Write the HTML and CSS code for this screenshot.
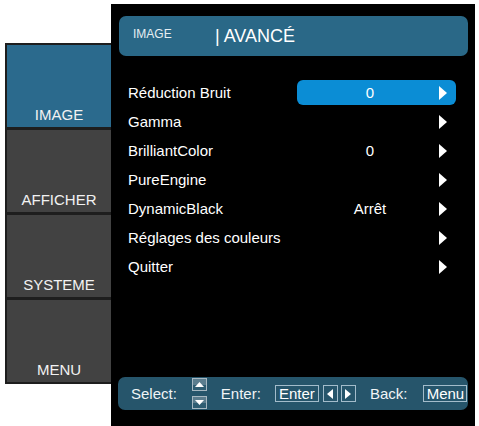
FILE: index.html
```html
<!DOCTYPE html>
<html lang="fr">
<head>
<meta charset="utf-8">
<title>Image | Avancé</title>
<link rel="stylesheet" href="styles.css">
</head>
<body>
<div class="screen">
  <nav class="sidebar">
    <div class="tab active"><span>IMAGE</span></div>
    <div class="tab"><span>AFFICHER</span></div>
    <div class="tab"><span>SYSTEME</span></div>
    <div class="tab"><span>MENU</span></div>
  </nav>
  <main class="panel">
    <header class="title">
      <span class="crumb">IMAGE</span>
      <span class="heading">| AVANCÉ</span>
    </header>
    <ul class="list">
      <li class="row selected"><span class="label">Réduction Bruit</span><span class="ctrl"><span class="value">0</span><span class="arrow"></span></span></li>
      <li class="row"><span class="label">Gamma</span><span class="ctrl"><span class="value"></span><span class="arrow"></span></span></li>
      <li class="row"><span class="label">BrilliantColor</span><span class="ctrl"><span class="value">0</span><span class="arrow"></span></span></li>
      <li class="row"><span class="label">PureEngine</span><span class="ctrl"><span class="value"></span><span class="arrow"></span></span></li>
      <li class="row"><span class="label">DynamicBlack</span><span class="ctrl"><span class="value">Arrêt</span><span class="arrow"></span></span></li>
      <li class="row"><span class="label">Réglages des couleurs</span><span class="ctrl"><span class="value"></span><span class="arrow"></span></span></li>
      <li class="row"><span class="label">Quitter</span><span class="ctrl"><span class="value"></span><span class="arrow"></span></span></li>
    </ul>
    <footer class="help">
      <span class="hint hint-select">Select:</span>
      <span class="updown">
        <span class="ikey"><svg width="13" height="11" viewBox="0 0 13 11"><polygon points="2,8 11,8 6.5,3" fill="#fff"/></svg></span>
        <span class="ikey"><svg width="13" height="11" viewBox="0 0 13 11"><polygon points="2,3 11,3 6.5,8" fill="#fff"/></svg></span>
      </span>
      <span class="hint hint-enter">Enter:</span>
      <span class="key key-word">Enter</span>
      <span class="key key-arrow"><svg width="12" height="14" viewBox="0 0 12 14"><polygon points="9,2 9,12 3,7" fill="#fff"/></svg></span>
      <span class="key key-arrow"><svg width="12" height="14" viewBox="0 0 12 14"><polygon points="3,2 3,12 9,7" fill="#fff"/></svg></span>
      <span class="hint hint-back">Back:</span>
      <span class="key key-word">Menu</span>
    </footer>
  </main>
</div>
</body>
</html>
```
FILE: styles.css
```css
* { box-sizing: border-box; }

html, body {
  margin: 0;
  padding: 0;
  background: #ffffff;
  font-family: "Liberation Sans", Arial, sans-serif;
  color: #ffffff;
}

.screen {
  display: flex;
  align-items: flex-start;
  padding-left: 5px;
  height: 426px;
  overflow: hidden;
}

/* Left sidebar */
.sidebar {
  margin-top: 43px;
  width: 106px;
  background: #1e1e1e;
  border: 2px solid #1e1e1e;
  border-right: 0;
  display: flex;
  flex-direction: column;
  gap: 3px;
}

.tab {
  height: 82px;
  background: #424242;
  display: flex;
  align-items: flex-end;
  justify-content: center;
  padding-bottom: 4px;
  font-size: 15px;
  line-height: 17px;
  color: #f2f2f2;
}

.tab.active {
  background: #2b6a8d;
}

/* Main black panel */
.panel {
  margin-top: 4px;
  width: 364px;
  height: 422px;
  background: #000000;
  display: flex;
  flex-direction: column;
  padding: 12px 7px 16px 7px;
}

.title {
  height: 40px;
  margin-left: 1px;
  background: #2a6887;
  border-radius: 7px;
  display: flex;
  align-items: center;
  padding-left: 14px;
}

.crumb {
  font-size: 12px;
  color: #e6eef2;
  margin-bottom: 5px;
  width: 82px;
}

.heading {
  font-size: 18px;
  color: #ffffff;
}

.list {
  list-style: none;
  margin: 22px 0 0 0;
  padding: 0;
}

.row {
  height: 29px;
  display: flex;
  align-items: center;
  padding-left: 10px;
  font-size: 15px;
}

.label {
  flex: 1;
  color: #ffffff;
}

.ctrl {
  width: 159px;
  height: 25px;
  margin-right: 12px;
  border-radius: 6px;
  display: flex;
  align-items: center;
}

.row.selected .ctrl {
  background: #0b8dd5;
}

.value {
  flex: 1;
  text-align: center;
  padding-left: 4px;
  font-size: 15px;
}

.arrow {
  width: 0;
  height: 0;
  border-top: 7px solid transparent;
  border-bottom: 7px solid transparent;
  border-left: 8px solid #ffffff;
  margin-right: 9px;
}

/* Bottom help bar */
.help {
  margin-top: auto;
  height: 33px;
  background: #26556b;
  border-radius: 7px;
  display: flex;
  align-items: center;
  padding-left: 13px;
  font-size: 15px;
}

.hint {
  color: #f0f4f6;
}

.updown {
  display: flex;
  flex-direction: column;
  gap: 5px;
  margin-left: 15px;
}

.ikey {
  width: 15px;
  height: 13px;
  border: 1px solid #a7b8c2;
  background: linear-gradient(#5b7d8e 0 50%, #2f5d72 50% 100%);
  display: flex;
}

.hint-enter { margin-left: 14px; }

.key {
  border: 1px solid #a3bccb;
  height: 17px;
  display: flex;
  align-items: center;
  justify-content: center;
  line-height: 15px;
}

.key-word {
  width: 44px;
  font-size: 15px;
}

.hint-enter + .key-word { margin-left: 14px; }

.key-arrow {
  width: 15px;
  margin-left: 3px;
}

.key-word + .key-arrow { margin-left: 4px; }

.hint-back { margin-left: 14px; }

.hint-back + .key-word { margin-left: 16px; }
```
